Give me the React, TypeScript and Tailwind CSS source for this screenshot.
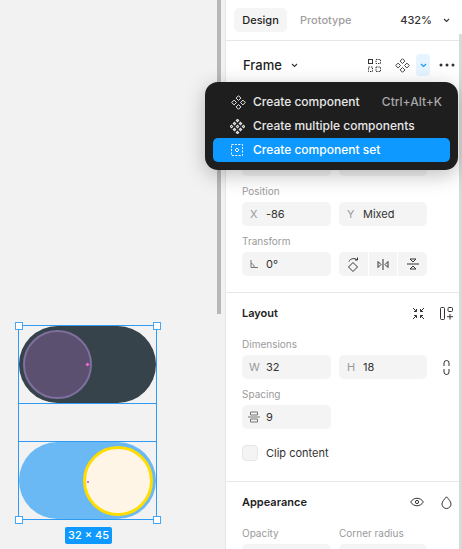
const labelCls = "text-[10px] leading-[14px] text-[#9a9a9a]";
const inputCls = "flex h-6 shrink-0 items-center rounded-[5px] bg-[#f4f4f4] text-[11px] text-[#333]";

function Diamond({ color = "currentColor" }: { color?: string }) {
  // four small hollow diamonds arranged as the component glyph
  const d = "M7.500 .7 9.900 3.100 7.500 5.500 5.100 3.100Z M3.100 5.100 5.500 7.500 3.100 9.900 .7 7.500Z M11.900 5.100 14.300 7.500 11.900 9.900 9.500 7.500Z M7.500 9.500 9.900 11.900 7.500 14.300 5.100 11.900Z";
  return (
    <svg width="15" height="15" viewBox="0 0 15 15" fill="none" stroke={color} strokeWidth="1" strokeLinejoin="round">
      <path d={d} />
    </svg>
  );
}

function MultiDiamond() {
  return (
    <svg width="15" height="15" viewBox="0 0 15 15" fill="none" stroke="#e6e6e6" strokeWidth="1.1">
      <path d="M7.5 .3 8.700 1.500 7.500 2.700 6.300 1.500Z M4.500 3.300 5.700 4.500 4.500 5.700 3.300 4.500Z M10.500 3.300 11.700 4.500 10.500 5.700 9.300 4.500Z M1.500 6.300 2.700 7.500 1.500 8.700 .3 7.500Z M7.500 6.300 8.700 7.500 7.500 8.700 6.300 7.500Z M13.500 6.300 14.700 7.500 13.500 8.700 12.300 7.500Z M4.500 9.300 5.700 10.500 4.500 11.700 3.300 10.500Z M10.500 9.300 11.700 10.500 10.500 11.700 9.300 10.500Z M7.500 12.300 8.700 13.500 7.500 14.700 6.300 13.500Z" />
    </svg>
  );
}

function Chevron({ color = "#333" }: { color?: string }) {
  return (
    <svg width="7" height="5" viewBox="0 0 7 5" fill="none" stroke={color} strokeWidth="1.1">
      <path d="M1 1 3.5 3.5 6 1" />
    </svg>
  );
}

function Handle({ className }: { className: string }) {
  return <div className={`absolute h-[8px] w-[8px] border border-[#45a8f7] bg-white ${className}`} />;
}

function Canvas() {
  return (
    <div className="relative h-full w-[225px] shrink-0 bg-[#f2f2f2]">
      <div className="absolute left-[217px] top-0 h-[314px] w-[4px] bg-[#b8b8b8]" />
      <div className="absolute left-[18px] top-[325px] flex h-[195px] w-[139px] flex-col border border-[#2f9bf5]">
        <div className="flex h-[77px] items-center rounded-full bg-[#37434b] pl-[4px]">
          <div className="h-[69px] w-[69px] rounded-full border-[2px] border-[#7f6f9f] bg-[#5b5070]" />
        </div>
        <div className="h-[39px] border-y border-[#2f9bf5]" />
        <div className="flex h-[77px] items-center justify-end rounded-full bg-[#6ab9f5] pr-[3px]">
          <div className="h-[70px] w-[70px] rounded-full border-[3px] border-[#ffdd00] bg-[#fff5e7]" />
        </div>
        <div className="absolute left-[67px] top-[37px] h-[3px] w-[3px] rotate-45 bg-[#e86ad0]" />
        <div className="absolute left-[68px] top-[155px] h-[2px] w-[2px] bg-[#e86ad0]" />
      </div>
      <Handle className="left-[15px] top-[322px]" />
      <Handle className="left-[153px] top-[322px]" />
      <Handle className="left-[15px] top-[516px]" />
      <Handle className="left-[153px] top-[516px]" />
      <div className="absolute left-[65px] top-[527px] flex h-[17px] w-[47px] items-center justify-center rounded-[2px] bg-[#0d99ff] text-[11px] font-medium text-white">
        32 × 45
      </div>
    </div>
  );
}

function Menu() {
  return (
    <div className="absolute left-[205px] top-[82px] z-10 flex h-[88px] w-[253px] flex-col rounded-[13px] bg-[#1e1e1e] p-2 text-[12px] font-medium text-[#e8e8e8] shadow-[0_5px_20px_rgba(0,0,0,0.25)]">
      <div className="flex h-6 items-center pl-[18px] pr-[8px]">
        <span className="w-[22px]"><Diamond /></span>
        <span>Create component</span>
        <span className="ml-auto text-[#a8a8a8]">Ctrl+Alt+K</span>
      </div>
      <div className="flex h-6 items-center pl-[17px]">
        <span className="w-[23px]"><MultiDiamond /></span>
        <span>Create multiple components</span>
      </div>
      <div className="flex h-6 items-center rounded-[5px] bg-[#0d99ff] pl-[18px] text-white">
        <span className="w-[22px]">
          <svg width="12" height="12" viewBox="0 0 12 12" fill="none" stroke="#fff" strokeWidth="1">
            <rect x="0.5" y="0.5" width="11" height="11" strokeDasharray="2 1.4" />
            <path d="M6 4 8 6 6 8 4 6Z" />
          </svg>
        </span>
        <span>Create component set</span>
      </div>
    </div>
  );
}

function Section({ children, className = "" }: { children: React.ReactNode; className?: string }) {
  return <div className={`border-b border-[#e6e6e6] px-[16px] ${className}`}>{children}</div>;
}

function Panel() {
  return (
    <div className="flex h-full w-[237px] flex-col overflow-hidden border-l border-[#e6e6e6] bg-white text-[#1e1e1e]">
      <div className="flex h-[41px] shrink-0 items-center border-b border-[#e6e6e6] pl-[8px] pr-[12px] text-[11px] font-medium">
        <div className="flex h-6 w-[53px] items-center justify-center rounded-[5px] bg-[#f5f5f5]">Design</div>
        <div className="ml-[13px] text-[#a0a0a0]">Prototype</div>
        <div className="ml-auto mr-[11px] text-[#333]">432%</div>
        <Chevron />
      </div>
      <Section className="h-[252px] shrink-0">
        <div className="flex h-[48px] items-center">
          <span className="pl-px pt-[2px] text-[13px] font-medium">Frame</span>
          <span className="ml-[9px]"><Chevron /></span>
          <svg className="ml-auto" width="13" height="13" viewBox="0 0 13 13" fill="none" stroke="#333" strokeWidth="1">
            <rect x="0.5" y="0.5" width="4" height="4" />
            <rect x="8" y="0.5" width="4.5" height="4" strokeDasharray="1.4 1" />
            <rect x="0.5" y="8" width="4" height="4.5" strokeDasharray="1.4 1" />
            <rect x="8" y="8" width="4.5" height="4.5" strokeDasharray="1.4 1" />
          </svg>
          <span className="ml-[14px] text-[#444]"><Diamond /></span>
          <span className="ml-[6px] flex h-[22px] w-[14px] items-center justify-center rounded-[4px] bg-[#e5f4ff]">
            <Chevron color="#0d99ff" />
          </span>
          <svg className="-mr-[9px] ml-[9px]" width="16" height="4" viewBox="0 0 16 4" fill="#333">
            <circle cx="2" cy="2" r="1.5" />
            <circle cx="8" cy="2" r="1.5" />
            <circle cx="14" cy="2" r="1.5" />
          </svg>
        </div>
        <div className="mt-[63px] flex gap-2">
          <div className="h-6 w-[89px] rounded-[5px] bg-[#f4f4f4]" />
          <div className="h-6 w-[88px] rounded-[5px] bg-[#f4f4f4]" />
        </div>
        <div className={`${labelCls} mt-2`}>Position</div>
        <div className="mt-1 flex gap-2">
          <div className={`${inputCls} w-[89px]`}>
            <span className="w-[24px] pl-[8px] text-[#999]">X</span>-86
          </div>
          <div className={`${inputCls} w-[88px]`}>
            <span className="w-[24px] pl-[8px] text-[#999]">Y</span>Mixed
          </div>
        </div>
        <div className={`${labelCls} mt-2`}>Transform</div>
        <div className="mt-1 flex gap-2">
          <div className={`${inputCls} w-[89px]`}>
            <svg className="mx-[8px]" width="8" height="8" viewBox="0 0 8 8" fill="none" stroke="#777" strokeWidth="1">
              <path d="M1 0v7.5h7M1 3.500c2 .3 3.200 1.800 3.300 4" />
            </svg>
            0°
          </div>
          <div className="flex h-6 w-[88px] divide-x divide-white rounded-[5px] bg-[#f4f4f4]">
            <div className="flex flex-1 items-center justify-center">
              <svg width="12" height="15" viewBox="0 0 12 15" fill="none" stroke="#333" strokeWidth="1">
                <path d="M6 5.500 10.500 10 6 14.500 1.500 10Z M2 4.500C3 1.500 8 .5 10 3M10.500 .5V3H8" />
              </svg>
            </div>
            <div className="flex flex-1 items-center justify-center">
              <svg width="12" height="11" viewBox="0 0 12 11" fill="none" stroke="#333" strokeWidth="1">
                <path d="M6 0v11M1 2.500 4 5.500 1 8.500ZM11 2.500 8 5.500 11 8.500Z" />
              </svg>
            </div>
            <div className="flex flex-1 items-center justify-center">
              <svg width="12" height="12" viewBox="0 0 12 12" fill="none" stroke="#333" strokeWidth="1">
                <path d="M0 6h12M3 1h6L6 4ZM3 11h6L6 8Z" />
              </svg>
            </div>
          </div>
        </div>
      </Section>
      <Section className="h-[189px] shrink-0">
        <div className="flex h-[40px] items-center">
          <span className="text-[11px] font-semibold">Layout</span>
          <svg className="ml-auto" width="13" height="13" viewBox="0 0 13 13" fill="none" stroke="#333" strokeWidth="1">
            <path d="M1 1 4.500 4.500M4.500 2v2.500H2M12 1 8.500 4.500M8.500 2v2.500H11M1 12l3.500-3.500M4.500 11V8.500H2M12 12 8.500 8.500M8.500 11V8.500H11" />
          </svg>
          <svg className="-mr-[8px] ml-[15px]" width="14" height="13" viewBox="0 0 14 13" fill="none" stroke="#333" strokeWidth="1">
            <rect x="0.5" y="0.5" width="4" height="12" rx="1" />
            <rect x="8" y="0.5" width="4.500" height="4" rx="1" />
            <path d="M10 7v5.500M7 9.700h6" />
          </svg>
        </div>
        <div className={`${labelCls} mt-1`}>Dimensions</div>
        <div className="mt-1 flex items-center gap-2">
          <div className={`${inputCls} w-[89px]`}>
            <span className="w-[24px] pl-[7px] text-[#999]">W</span>32
          </div>
          <div className={`${inputCls} w-[88px]`}>
            <span className="w-[24px] pl-[8px] text-[#999]">H</span>18
          </div>
          <svg className="ml-[8px] shrink-0" width="7" height="15" viewBox="0 0 7 15" fill="none" stroke="#333" strokeWidth="1">
            <path d="M1 6V3a2.500 2.500 0 0 1 5 0v3M1 9v3a2.500 2.500 0 0 0 5 0V9" />
          </svg>
        </div>
        <div className={`${labelCls} mt-2`}>Spacing</div>
        <div className="mt-1 flex">
          <div className={`${inputCls} w-[89px]`}>
            <svg className="ml-[6px] mr-[6px]" width="12" height="12" viewBox="0 0 12 12" fill="none" stroke="#777" strokeWidth="1">
              <path d="M0 6h12M2.500 1h7v3h-7ZM2.500 8h7v3h-7Z" />
            </svg>
            9
          </div>
        </div>
        <div className="mt-4 flex items-center text-[11px] text-[#333]">
          <div className="h-4 w-4 rounded-[4px] border border-[#e6e6e6] bg-[#f4f4f4]" />
          <span className="ml-[8px]">Clip content</span>
        </div>
      </Section>
      <div className="px-[16px]">
        <div className="flex h-[40px] items-center">
          <span className="text-[11px] font-semibold">Appearance</span>
          <svg className="ml-auto" width="14" height="10" viewBox="0 0 14 10" fill="none" stroke="#333" strokeWidth="1">
            <path d="M.7 5C3.500 0 10.500 0 13.300 5 10.500 10 3.500 10 .7 5Z" />
            <circle cx="7" cy="5" r="1.600" />
          </svg>
          <svg className="-mr-[6px] ml-[17px]" width="11" height="13" viewBox="0 0 11 13" fill="none" stroke="#333" strokeWidth="1">
            <path d="M5.500 .8C7.500 3 10 5.500 10 8a4.500 4.500 0 0 1-9 0C1 5.500 3.500 3 5.500 .8Z" />
          </svg>
        </div>
        <div className="mt-1 flex gap-2">
          <div className={`${labelCls} w-[89px]`}>Opacity</div>
          <div className={labelCls}>Corner radius</div>
        </div>
        <div className="mt-1 flex gap-2">
          <div className="h-6 w-[89px] rounded-[5px] bg-[#f4f4f4]" />
          <div className="h-6 w-[88px] rounded-[5px] bg-[#f4f4f4]" />
        </div>
      </div>
    </div>
  );
}

export default function App() {
  return (
    <div className="relative flex h-[549px] w-[462px] overflow-hidden font-['Inter',sans-serif]">
      <Canvas />
      <Panel />
      {/* right panel scrollbar */}
      <div className="absolute right-0 top-[34px] h-[515px] w-[3px] bg-[#d9d9d9]" />
      <Menu />
    </div>
  );
}
